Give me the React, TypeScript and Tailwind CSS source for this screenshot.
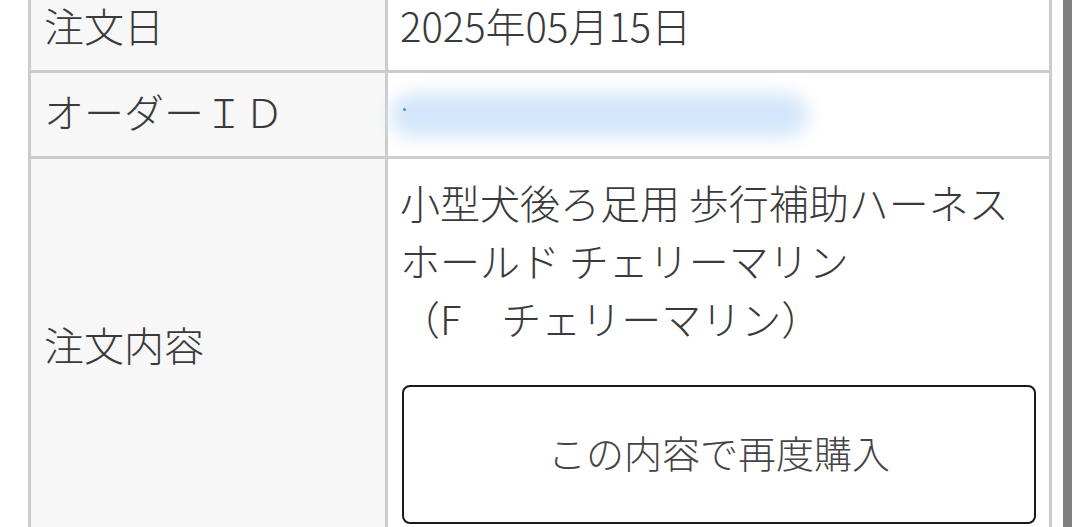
const FONT = {
  fontFamily: '"Noto Sans CJK JP", "Liberation Sans", sans-serif',
};

function LabelCell({ children }: { children: React.ReactNode }) {
  return (
    <div className="flex w-[357px] shrink-0 items-center border-r-[3px] border-[#cccccc] bg-[#f7f7f7] pb-[8px] pl-[13px] text-[40px] leading-[58px] font-light text-[#3a3a3a]">
      {children}
    </div>
  );
}

export default function App() {
  return (
    <div className="flex h-[527px] w-[1080px] overflow-hidden bg-white" style={FONT}>
      <div className="w-[28px] shrink-0" />

      <div className="-mt-[16px] w-[1024px] shrink-0 self-start border-x-[3px] border-t-[3px] border-[#cccccc]">
        {/* 注文日 */}
        <div className="flex border-b-[3px] border-[#cccccc]">
          <LabelCell>注文日</LabelCell>
          <div className="flex-1 px-[12px] pt-[9px] pb-[16px] text-[40px] leading-[58px] font-light text-[#3a3a3a]">
            2025年05月15日
          </div>
        </div>

        {/* オーダーID */}
        <div className="flex border-b-[3px] border-[#cccccc]">
          <LabelCell>オーダーＩＤ</LabelCell>
          <div className="relative flex-1 px-[12px] pt-[9px] pb-[16px] text-[40px] leading-[58px]">
            <span className="invisible">0000000000</span>
            <div className="absolute top-[20px] left-[2px] h-[44px] w-[418px] rounded-full bg-[#d3e6fa] blur-[9px]" />
            <div className="absolute top-[35px] left-[15px] h-[3px] w-[3px] rounded-full bg-[#3b8fd6]" />
          </div>
        </div>

        {/* 注文内容 */}
        <div className="flex border-b-[3px] border-[#cccccc]">
          <LabelCell>注文内容</LabelCell>
          <div className="flex-1 px-[12px] pt-[14px] pb-[13px] text-[40px] leading-[58px] font-light text-[#3a3a3a]">
            <div className="whitespace-nowrap">小型犬後ろ足用 歩行補助ハーネス</div>
            <div className="whitespace-nowrap">ホールド チェリーマリン</div>
            <div className="whitespace-nowrap">（F　チェリーマリン）</div>
            <button className="mt-[38px] ml-[2px] flex h-[139px] w-[634px] items-center justify-center rounded-[8px] border-2 border-[#1a1a1a] bg-white pb-[6px] text-[38px] font-light text-[#444444]">
              この内容で再度購入
            </button>
          </div>
        </div>
      </div>

      <div className="w-[11px] shrink-0" />
      <div className="w-[9px] shrink-0 bg-[#808080]" />
    </div>
  );
}
